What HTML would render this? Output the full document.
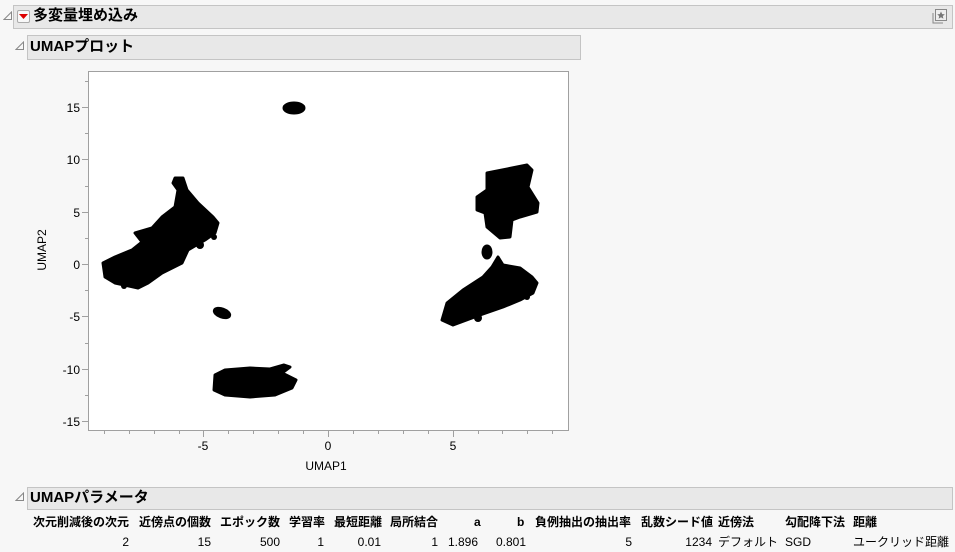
<!DOCTYPE html>
<html><head><meta charset="utf-8"><style>
*{margin:0;padding:0;box-sizing:border-box}
body{width:955px;height:552px;background:#f7f7f7;position:relative;overflow:hidden;font-family:"Liberation Sans","Noto Sans CJK JP",sans-serif;color:#000}
.bar{position:absolute;background:#e8e8e8;border:1px solid #c4c4c4}
.tt{position:absolute;font-weight:bold;font-size:15px;line-height:20px}
.t{position:absolute;font-size:12px;line-height:14px;white-space:nowrap}
.h{font-weight:bold}
.r{text-align:right}
</style></head><body>
<div class="bar" style="left:13px;top:5px;width:940px;height:24px"></div>
<svg style="position:absolute;left:3px;top:11px" width="10" height="10"><path d="M1 8.5 L8.5 8.5 L8.5 1 Z" fill="none" stroke="#888" stroke-width="1"/></svg>
<div style="position:absolute;left:17px;top:10px;width:13px;height:13px;border:1px solid #aaa;background:#f8f8f8;border-radius:2px"></div>
<svg style="position:absolute;left:19px;top:14px" width="9" height="6"><path d="M0 0 L9 0 L4.5 5 Z" fill="#d00"/></svg>
<div class="tt" style="left:33px;top:6px">多変量埋め込み</div>
<svg style="position:absolute;left:930px;top:7px" width="20" height="20"><rect x="5.5" y="2.5" width="11" height="11" fill="#eee" stroke="#888"/><path d="M3 6 V16 H13" fill="none" stroke="#888"/><path d="M11 4.5 l1.2 2.6 2.6.2 -2 1.8.6 2.6 -2.4-1.4 -2.4 1.4.6-2.6 -2-1.8 2.6-.2z" fill="#777"/></svg>
<div class="bar" style="left:27px;top:35px;width:554px;height:25px"></div>
<svg style="position:absolute;left:15px;top:41px" width="10" height="10"><path d="M1 8.5 L8.5 8.5 L8.5 1 Z" fill="none" stroke="#888"/></svg>
<div class="tt" style="left:30px;top:37px">UMAPプロット</div>
<svg style="position:absolute;left:0;top:0" width="955" height="480">
<rect x="88.5" y="71.5" width="480" height="359" fill="#fff" stroke="#a0a0a0"/>
<g stroke="#a0a0a0" stroke-width="1">
<path d="M82 107.5H88 M82 159.5H88 M82 212.5H88 M82 264.5H88 M82 316.5H88 M82 369.5H88 M82 421.5H88"/>
<path d="M85 81.5H88 M85 133.5H88 M85 186.5H88 M85 238.5H88 M85 290.5H88 M85 343.5H88 M85 395.5H88"/>
<path d="M203.5 431V437 M328.5 431V437 M453.5 431V437"/>
<path d="M104.5 431V434 M129.5 431V434 M154.5 431V434 M179.5 431V434 M228.5 431V434 M253.5 431V434 M278.5 431V434 M303.5 431V434 M353.5 431V434 M378.5 431V434 M403.5 431V434 M428.5 431V434 M478.5 431V434 M502.5 431V434 M527.5 431V434 M552.5 431V434"/>
</g>
<g font-family="Liberation Sans, sans-serif" font-size="12" fill="#000" text-anchor="end">
<text x="80" y="112">15</text><text x="80" y="164">10</text><text x="80" y="217">5</text><text x="80" y="269">0</text><text x="80" y="321">-5</text><text x="80" y="374">-10</text><text x="80" y="426">-15</text>
</g>
<g font-family="Liberation Sans, sans-serif" font-size="12" fill="#000" text-anchor="middle">
<text x="203" y="450">-5</text><text x="328" y="450">0</text><text x="453" y="450">5</text>
<text x="326" y="470">UMAP1</text>
<text transform="translate(46,250) rotate(-90)">UMAP2</text>
</g>
<g fill="#000" stroke="#000" stroke-width="3" stroke-linejoin="round">
<ellipse cx="294" cy="108" rx="10" ry="5"/>
<ellipse cx="222" cy="313" rx="8" ry="4" transform="rotate(20 222 313)"/>
<path d="M175 178 L183 178 L187 190 L198 203 L213 217 L218 223 L215 233 L205 240 L188 250 L182 263 L162 273 L148 283 L138 288 L115 283 L105 277 L103 263 L115 257 L132 250 L142 242 L135 233 L152 228 L162 217 L175 207 L178 190 L173 183 Z"/>
<path d="M215 375 L225 370 L250 368 L270 369 L284 365 L290 367 L282 373 L296 380 L292 388 L275 395 L250 397 L225 395 L214 390 Z"/>
<path d="M487 173 L527 165 L532 170 L528 187 L538 203 L537 212 L520 217 L512 220 L510 237 L500 238 L487 227 L485 213 L477 210 L477 197 L487 190 Z"/>
<path d="M498 257 L503 265 L520 268 L532 277 L537 283 L533 293 L520 300 L503 307 L480 315 L453 325 L442 320 L447 303 L463 290 L483 277 L492 267 Z"/>
<ellipse cx="487" cy="252" rx="4" ry="6"/>
</g>
<g fill="#000">
<circle cx="138" cy="234" r="3"/><circle cx="110" cy="268" r="4"/><circle cx="124" cy="286" r="3"/><circle cx="200" cy="245" r="4"/><circle cx="214" cy="237" r="3"/>
<circle cx="478" cy="318" r="4"/><circle cx="460" cy="310" r="3"/><circle cx="527" cy="297" r="3"/><circle cx="505" cy="280" r="4"/>
<circle cx="495" cy="213" r="3"/><circle cx="530" cy="208" r="3"/><circle cx="219" cy="386" r="4"/>
</g>
</svg>
<div class="bar" style="left:27px;top:487px;width:926px;height:23px"></div>
<svg style="position:absolute;left:15px;top:492px" width="10" height="10"><path d="M1 8.5 L8.5 8.5 L8.5 1 Z" fill="none" stroke="#888"/></svg>
<div class="tt" style="left:30px;top:488px">UMAPパラメータ</div>
<div class="t h" style="left:33px;top:515px">次元削減後の次元</div>
<div class="t h" style="left:139px;top:515px">近傍点の個数</div>
<div class="t h" style="left:220px;top:515px">エポック数</div>
<div class="t h" style="left:289px;top:515px">学習率</div>
<div class="t h" style="left:334px;top:515px">最短距離</div>
<div class="t h" style="left:390px;top:515px">局所結合</div>
<div class="t h" style="left:474px;top:515px">a</div>
<div class="t h" style="left:517px;top:515px">b</div>
<div class="t h" style="left:535px;top:515px">負例抽出の抽出率</div>
<div class="t h" style="left:641px;top:515px">乱数シード値</div>
<div class="t h" style="left:718px;top:515px">近傍法</div>
<div class="t h" style="left:785px;top:515px">勾配降下法</div>
<div class="t h" style="left:853px;top:515px">距離</div>
<div class="t r" style="right:826px;top:535px">2</div>
<div class="t r" style="right:744px;top:535px">15</div>
<div class="t r" style="right:675px;top:535px">500</div>
<div class="t r" style="right:631px;top:535px">1</div>
<div class="t r" style="right:574px;top:535px">0.01</div>
<div class="t r" style="right:517px;top:535px">1</div>
<div class="t r" style="right:477px;top:535px">1.896</div>
<div class="t r" style="right:429px;top:535px">0.801</div>
<div class="t r" style="right:323px;top:535px">5</div>
<div class="t r" style="right:243px;top:535px">1234</div>
<div class="t" style="left:718px;top:535px">デフォルト</div>
<div class="t" style="left:785px;top:535px">SGD</div>
<div class="t" style="left:853px;top:535px">ユークリッド距離</div>
</body></html>
